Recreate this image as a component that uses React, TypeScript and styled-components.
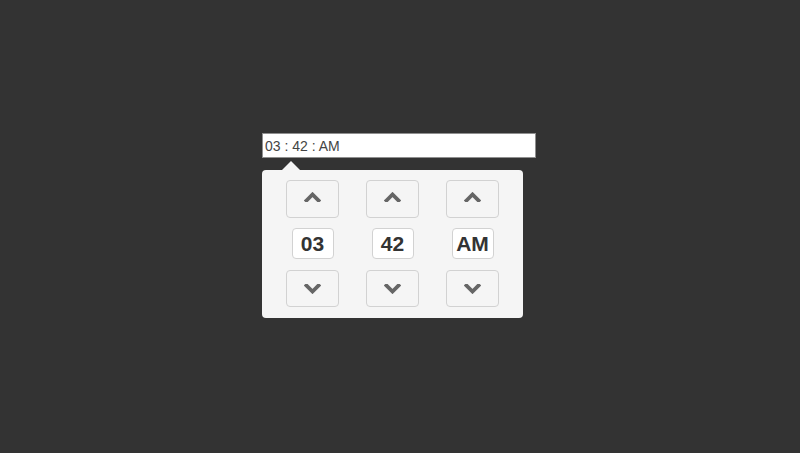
import React, { useState } from "react";
import styled, { createGlobalStyle } from "styled-components";

const Global = createGlobalStyle`
  html, body { margin: 0; padding: 0; background: #333333; }
  body { font-family: "Liberation Sans", Arial, sans-serif; }
`;

const Page = styled.div`
  width: 800px;
  height: 453px;
  box-sizing: border-box;
  padding: 133px 0 0 262px;
  display: flex;
  flex-direction: column;
  align-items: flex-start;
`;

const Field = styled.input`
  box-sizing: border-box;
  width: 274px;
  height: 25px;
  margin: 0;
  padding: 0 0 0 2px;
  border: 1px solid #8f8f8f;
  background: #ffffff;
  color: #444444;
  font-family: "Liberation Sans", Arial, sans-serif;
  font-size: 14px;
  outline: none;
`;

const Popup = styled.div`
  position: relative;
  box-sizing: border-box;
  margin-top: 12px;
  width: 261px;
  height: 148px;
  padding: 10px 24px 11px;
  background: #f5f5f5;
  border-radius: 4px;
  display: grid;
  grid-template-columns: repeat(3, 53px);
  grid-template-rows: 38px 32px 37px;
  column-gap: 27px;
  row-gap: 10px;
  &::before {
    content: "";
    position: absolute;
    top: -9px;
    left: 20px;
    border-left: 9px solid transparent;
    border-right: 9px solid transparent;
    border-bottom: 9px solid #f5f5f5;
  }
`;

const Spin = styled.button<{ $up?: boolean }>`
  box-sizing: border-box;
  width: 53px;
  height: 100%;
  margin: 0;
  padding: ${(p) => (p.$up ? "0 0 5px" : "0")};
  border: 1px solid #d2d2d2;
  border-radius: 4px;
  background: #f5f5f5;
  display: flex;
  align-items: center;
  justify-content: center;
  cursor: pointer;
`;

const Value = styled.div`
  box-sizing: border-box;
  justify-self: center;
  align-self: start;
  width: 42px;
  height: 31px;
  border: 1px solid #d2d2d2;
  border-radius: 4px;
  background: #ffffff;
  color: #333333;
  font-family: "Liberation Sans", Arial, sans-serif;
  font-weight: bold;
  font-size: 21px;
  line-height: 29px;
  text-align: center;
`;

const Chevron = ({ dir }: { dir: "up" | "down" }) => (
  <svg width="17" height="10" viewBox="0 0 17 10">
    <polyline
      points={dir === "up" ? "2.5,8.5 8.5,2.5 14.5,8.5" : "2.5,1.5 8.5,7.5 14.5,1.5"}
      fill="none"
      stroke="#666666"
      strokeWidth="3.8"
      strokeLinecap="square"
      strokeLinejoin="miter"
    />
  </svg>
);

export default function App() {
  const [vals] = useState(["03", "42", "AM"]);
  return (
    <>
      <Global />
      <Page>
        <Field readOnly value={`${vals[0]} : ${vals[1]} : ${vals[2]}`} />
        <Popup>
          {vals.map((_, i) => (
            <Spin key={`u${i}`} $up>
              <Chevron dir="up" />
            </Spin>
          ))}
          {vals.map((v, i) => (
            <Value key={`v${i}`}>{v}</Value>
          ))}
          {vals.map((_, i) => (
            <Spin key={`d${i}`}>
              <Chevron dir="down" />
            </Spin>
          ))}
        </Popup>
      </Page>
    </>
  );
}
